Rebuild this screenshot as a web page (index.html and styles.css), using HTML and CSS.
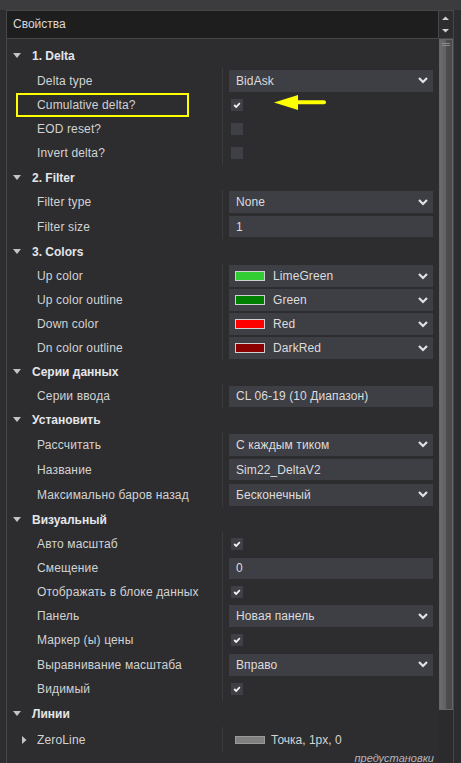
FILE: index.html
```html
<!DOCTYPE html>
<html lang="ru">
<head>
<meta charset="utf-8">
<title>Свойства</title>
<link rel="stylesheet" href="styles.css">
</head>
<body>
<div class="top-strip"></div>
<div class="panel">
  <div class="panel-head">
    <div class="title">Свойства</div>
    <div class="head-arrows">
      <svg width="13" height="27" viewBox="0 0 13 27"><polygon points="3,9 10,9 6.5,5.5" fill="#d0d0d0"/><polygon points="3,18 10,18 6.5,21.5" fill="#d0d0d0"/></svg>
    </div>
  </div>
  <div class="panel-body">
    <div class="list">
      <section class="group">
        <div class="group-head"><svg class="tri" width="8" height="5" viewBox="0 0 8 5"><polygon points="0,0 8,0 4,5" fill="#c4c4c4"/></svg>1. Delta</div>
        <div class="row h25"><div class="label">Delta type</div><div class="value"><div class="field select">BidAsk<svg class="chev" width="10" height="7" viewBox="0 0 10 7"><polyline points="1,1 5,5 9,1" fill="none" stroke="#e2e2e2" stroke-width="2.2"/></svg></div></div></div>
        <div class="row annotated"><div class="label">Cumulative delta?</div><div class="value"><span class="check on"><svg width="12" height="12" viewBox="0 0 12 12"><polyline points="3.2,6 5.2,8 8.8,4.2" fill="none" stroke="#f4f4f4" stroke-width="1.8"/></svg></span></div>
          <div class="highlight"></div>
          <svg class="pointer" width="56" height="18" viewBox="0 0 56 18"><polygon points="1,8.5 25,1 25,16" fill="#ffff00"/><line x1="24" y1="8.3" x2="51" y2="8.3" stroke="#ffff00" stroke-width="4" stroke-linecap="round"/></svg>
        </div>
        <div class="row"><div class="label">EOD reset?</div><div class="value"><span class="check"></span></div></div>
        <div class="row"><div class="label">Invert delta?</div><div class="value"><span class="check"></span></div></div>
      </section>
      <section class="group">
        <div class="group-head"><svg class="tri" width="8" height="5" viewBox="0 0 8 5"><polygon points="0,0 8,0 4,5" fill="#c4c4c4"/></svg>2. Filter</div>
        <div class="row"><div class="label">Filter type</div><div class="value"><div class="field select">None<svg class="chev" width="10" height="7" viewBox="0 0 10 7"><polyline points="1,1 5,5 9,1" fill="none" stroke="#e2e2e2" stroke-width="2.2"/></svg></div></div></div>
        <div class="row h25"><div class="label">Filter size</div><div class="value"><div class="field">1</div></div></div>
      </section>
      <section class="group">
        <div class="group-head"><svg class="tri" width="8" height="5" viewBox="0 0 8 5"><polygon points="0,0 8,0 4,5" fill="#c4c4c4"/></svg>3. Colors</div>
        <div class="row"><div class="label">Up color</div><div class="value"><div class="field select color"><span class="swatch sw-lime"></span>LimeGreen<svg class="chev" width="10" height="7" viewBox="0 0 10 7"><polyline points="1,1 5,5 9,1" fill="none" stroke="#e2e2e2" stroke-width="2.2"/></svg></div></div></div>
        <div class="row"><div class="label">Up color outline</div><div class="value"><div class="field select color"><span class="swatch sw-green"></span>Green<svg class="chev" width="10" height="7" viewBox="0 0 10 7"><polyline points="1,1 5,5 9,1" fill="none" stroke="#e2e2e2" stroke-width="2.2"/></svg></div></div></div>
        <div class="row"><div class="label">Down color</div><div class="value"><div class="field select color"><span class="swatch sw-red"></span>Red<svg class="chev" width="10" height="7" viewBox="0 0 10 7"><polyline points="1,1 5,5 9,1" fill="none" stroke="#e2e2e2" stroke-width="2.2"/></svg></div></div></div>
        <div class="row"><div class="label">Dn color outline</div><div class="value"><div class="field select color"><span class="swatch sw-darkred"></span>DarkRed<svg class="chev" width="10" height="7" viewBox="0 0 10 7"><polyline points="1,1 5,5 9,1" fill="none" stroke="#e2e2e2" stroke-width="2.2"/></svg></div></div></div>
      </section>
      <section class="group">
        <div class="group-head h24"><svg class="tri" width="8" height="5" viewBox="0 0 8 5"><polygon points="0,0 8,0 4,5" fill="#c4c4c4"/></svg>Серии данных</div>
        <div class="row"><div class="label">Серии ввода</div><div class="value"><div class="field">CL 06-19 (10 Диапазон)</div></div></div>
      </section>
      <section class="group">
        <div class="group-head h24"><svg class="tri" width="8" height="5" viewBox="0 0 8 5"><polygon points="0,0 8,0 4,5" fill="#c4c4c4"/></svg>Установить</div>
        <div class="row h25"><div class="label">Рассчитать</div><div class="value"><div class="field select">С каждым тиком<svg class="chev" width="10" height="7" viewBox="0 0 10 7"><polyline points="1,1 5,5 9,1" fill="none" stroke="#e2e2e2" stroke-width="2.2"/></svg></div></div></div>
        <div class="row h25"><div class="label">Название</div><div class="value"><div class="field">Sim22_DeltaV2</div></div></div>
        <div class="row h25"><div class="label">Максимально баров назад</div><div class="value"><div class="field select">Бесконечный<svg class="chev" width="10" height="7" viewBox="0 0 10 7"><polyline points="1,1 5,5 9,1" fill="none" stroke="#e2e2e2" stroke-width="2.2"/></svg></div></div></div>
      </section>
      <section class="group">
        <div class="group-head"><svg class="tri" width="8" height="5" viewBox="0 0 8 5"><polygon points="0,0 8,0 4,5" fill="#c4c4c4"/></svg>Визуальный</div>
        <div class="row"><div class="label">Авто масштаб</div><div class="value"><span class="check on"><svg width="12" height="12" viewBox="0 0 12 12"><polyline points="3.2,6 5.2,8 8.8,4.2" fill="none" stroke="#f4f4f4" stroke-width="1.8"/></svg></span></div></div>
        <div class="row"><div class="label">Смещение</div><div class="value"><div class="field">0</div></div></div>
        <div class="row"><div class="label">Отображать в блоке данных</div><div class="value"><span class="check on"><svg width="12" height="12" viewBox="0 0 12 12"><polyline points="3.2,6 5.2,8 8.8,4.2" fill="none" stroke="#f4f4f4" stroke-width="1.8"/></svg></span></div></div>
        <div class="row"><div class="label">Панель</div><div class="value"><div class="field select">Новая панель<svg class="chev" width="10" height="7" viewBox="0 0 10 7"><polyline points="1,1 5,5 9,1" fill="none" stroke="#e2e2e2" stroke-width="2.2"/></svg></div></div></div>
        <div class="row"><div class="label">Маркер (ы) цены</div><div class="value"><span class="check on"><svg width="12" height="12" viewBox="0 0 12 12"><polyline points="3.2,6 5.2,8 8.8,4.2" fill="none" stroke="#f4f4f4" stroke-width="1.8"/></svg></span></div></div>
        <div class="row h25"><div class="label">Выравнивание масштаба</div><div class="value"><div class="field select">Вправо<svg class="chev" width="10" height="7" viewBox="0 0 10 7"><polyline points="1,1 5,5 9,1" fill="none" stroke="#e2e2e2" stroke-width="2.2"/></svg></div></div></div>
        <div class="row"><div class="label">Видимый</div><div class="value"><span class="check on"><svg width="12" height="12" viewBox="0 0 12 12"><polyline points="3.2,6 5.2,8 8.8,4.2" fill="none" stroke="#f4f4f4" stroke-width="1.8"/></svg></span></div></div>
      </section>
      <section class="group">
        <div class="group-head h26"><svg class="tri" width="8" height="5" viewBox="0 0 8 5"><polygon points="0,0 8,0 4,5" fill="#c4c4c4"/></svg>Линии</div>
        <div class="row h25"><div class="label expand"><svg class="tri-r" width="5" height="8" viewBox="0 0 5 8"><polygon points="0,0 4.5,4 0,8" fill="#c4c4c4"/></svg>ZeroLine</div><div class="value"><span class="swatch sw-gray"></span><span class="plain">Точка, 1px, 0</span></div></div>
      </section>
      <div class="presets">предустановки</div>
    </div>
    <div class="scrollbar"><div class="thumb"><span class="grip"></span><span class="grip"></span></div></div>
  </div>
</div>
</body>
</html>
```

FILE: styles.css
```css
* { box-sizing: border-box; }
html, body {
  margin: 0;
  height: 763px;
  overflow: hidden;
  background: #2d2d30;
  font-family: "Liberation Sans", Arial, sans-serif;
  font-size: 12px;
}
.top-strip {
  height: 10px;
  background: #3c3c3e;
}
.panel {
  margin-left: 6px;
  width: 448px;
  height: 753px;
  border-left: 1px solid #47474a;
  border-right: 1px solid #47474a;
  border-top: 1px solid #47474a;
  display: flex;
  flex-direction: column;
}
.panel-head {
  height: 28px;
  display: flex;
  border-bottom: 1px solid #47474a;
  flex: none;
}
.title {
  flex: 1;
  background: #1e1e1e;
  color: #d8d8d8;
  padding-left: 6px;
  line-height: 27px;
  border-right: 1px solid #47474a;
}
.head-arrows {
  width: 14px;
  display: flex;
}
.panel-body {
  flex: 1;
  display: flex;
  min-height: 0;
}
.list {
  flex: 1;
  padding-top: 4px;
  min-width: 0;
}
.group-head {
  height: 25px;
  display: flex;
  align-items: center;
  padding-left: 6px;
  font-weight: bold;
  color: #e4e6ea;
}
.group-head.h24 { height: 24px; }
.group-head.h26 { height: 26px; }
.tri {
  margin-right: 11px;
  margin-top: -1px;
}
.row {
  height: 24px;
  display: flex;
}
.row.h25 { height: 25px; }
.annotated { position: relative; }
.label {
  width: 216px;
  flex: none;
  padding-left: 30px;
  border-right: 1px solid #3b3b3e;
  display: flex;
  align-items: center;
  color: #d2d2d2;
  white-space: nowrap;
  letter-spacing: 0.15px;
}
.label.expand { padding-left: 15px; }
.tri-r { margin-right: 10px; }
.value {
  flex: 1;
  display: flex;
  align-items: center;
  padding: 0 6px;
  color: #dcdcdc;
}
.field {
  flex: 1;
  height: 21px;
  background: #3e3e45;
  display: flex;
  align-items: center;
  padding-left: 7px;
  white-space: nowrap;
  letter-spacing: 0.1px;
}
.field.select { height: 22px; }
.field.color { padding-left: 6px; }
.chev {
  margin-left: auto;
  margin-right: 5px;
}
.check {
  width: 12px;
  height: 12px;
  margin-left: 2px;
  background: #3f3f46;
  display: block;
}
.check svg { display: block; }
.swatch {
  width: 30px;
  height: 10px;
  border: 1px solid #cfcfcf;
  margin-right: 8px;
  flex: none;
}
.sw-lime { background: #32cd32; }
.sw-green { background: #008000; }
.sw-red { background: #ff0000; }
.sw-darkred { background: #8b0000; }
.sw-gray {
  background: #808080;
  border-color: #9a9a9a;
  height: 8px;
  margin-left: 6px;
  margin-right: 6px;
}
.plain { color: #d4d4d4; }
.highlight {
  position: absolute;
  left: 9px;
  top: 0;
  width: 173px;
  height: 24px;
  border: 2px solid #ffff00;
  pointer-events: none;
}
.pointer {
  position: absolute;
  left: 266px;
  top: 1px;
}
.presets {
  text-align: right;
  padding-right: 5px;
  font-style: italic;
  font-size: 11px;
  line-height: 12px;
  color: #b4b6be;
}
.scrollbar {
  width: 14px;
  flex: none;
  background: #2b2b2d;
}
.thumb {
  height: 671px;
  border: 1px solid #66666a;
  background: linear-gradient(to right, #6c6c6e 0%, #626264 45%, #4c4c4e 55%, #4a4a4c 100%);
  padding-top: 2px;
}
.grip {
  display: block;
  height: 1px;
  margin: 1px 2px 1px 2px;
  background: #8a8a8c;
}
```
